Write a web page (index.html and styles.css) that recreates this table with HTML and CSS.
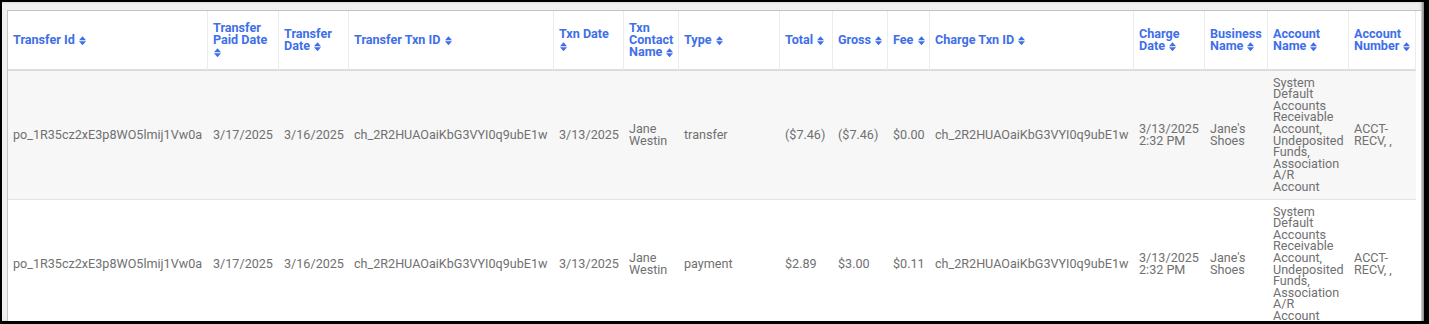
FILE: index.html
```html
<!DOCTYPE html>
<html lang="en">
<head>
<meta charset="utf-8">
<title>Transfers</title>
<link rel="stylesheet" href="styles.css">
</head>
<body>
<div class="window">
  <div class="panel">
    <table class="grid">
      <colgroup>
        <col class="c1"><col class="c2"><col class="c3"><col class="c4"><col class="c5">
        <col class="c6"><col class="c7"><col class="c8"><col class="c9"><col class="c10">
        <col class="c11"><col class="c12"><col class="c13"><col class="c14"><col class="c15">
      </colgroup>
      <thead>
        <tr>
          <th>Transfer Id <svg class="sort" viewBox="0 0 7 9"><path d="M0 4 L3.5 0 L7 4 Z M0 5 L7 5 L3.5 9 Z"/></svg></th>
          <th>Transfer Paid Date <svg class="sort" viewBox="0 0 7 9"><path d="M0 4 L3.5 0 L7 4 Z M0 5 L7 5 L3.5 9 Z"/></svg></th>
          <th>Transfer Date <svg class="sort" viewBox="0 0 7 9"><path d="M0 4 L3.5 0 L7 4 Z M0 5 L7 5 L3.5 9 Z"/></svg></th>
          <th>Transfer Txn ID <svg class="sort" viewBox="0 0 7 9"><path d="M0 4 L3.5 0 L7 4 Z M0 5 L7 5 L3.5 9 Z"/></svg></th>
          <th>Txn Date <svg class="sort" viewBox="0 0 7 9"><path d="M0 4 L3.5 0 L7 4 Z M0 5 L7 5 L3.5 9 Z"/></svg></th>
          <th>Txn Contact Name <svg class="sort" viewBox="0 0 7 9"><path d="M0 4 L3.5 0 L7 4 Z M0 5 L7 5 L3.5 9 Z"/></svg></th>
          <th>Type <svg class="sort" viewBox="0 0 7 9"><path d="M0 4 L3.5 0 L7 4 Z M0 5 L7 5 L3.5 9 Z"/></svg></th>
          <th>Total <svg class="sort" viewBox="0 0 7 9"><path d="M0 4 L3.5 0 L7 4 Z M0 5 L7 5 L3.5 9 Z"/></svg></th>
          <th>Gross <svg class="sort" viewBox="0 0 7 9"><path d="M0 4 L3.5 0 L7 4 Z M0 5 L7 5 L3.5 9 Z"/></svg></th>
          <th>Fee <svg class="sort" viewBox="0 0 7 9"><path d="M0 4 L3.5 0 L7 4 Z M0 5 L7 5 L3.5 9 Z"/></svg></th>
          <th>Charge Txn ID <svg class="sort" viewBox="0 0 7 9"><path d="M0 4 L3.5 0 L7 4 Z M0 5 L7 5 L3.5 9 Z"/></svg></th>
          <th>Charge Date <svg class="sort" viewBox="0 0 7 9"><path d="M0 4 L3.5 0 L7 4 Z M0 5 L7 5 L3.5 9 Z"/></svg></th>
          <th>Business Name <svg class="sort" viewBox="0 0 7 9"><path d="M0 4 L3.5 0 L7 4 Z M0 5 L7 5 L3.5 9 Z"/></svg></th>
          <th>Account Name <svg class="sort" viewBox="0 0 7 9"><path d="M0 4 L3.5 0 L7 4 Z M0 5 L7 5 L3.5 9 Z"/></svg></th>
          <th>Account Number <svg class="sort" viewBox="0 0 7 9"><path d="M0 4 L3.5 0 L7 4 Z M0 5 L7 5 L3.5 9 Z"/></svg></th>
        </tr>
      </thead>
      <tbody>
        <tr class="odd">
          <td>po_1R35cz2xE3p8WO5lmij1Vw0a</td>
          <td>3/17/2025</td>
          <td>3/16/2025</td>
          <td>ch_2R2HUAOaiKbG3VYI0q9ubE1w</td>
          <td>3/13/2025</td>
          <td>Jane Westin</td>
          <td>transfer</td>
          <td>($7.46)</td>
          <td>($7.46)</td>
          <td>$0.00</td>
          <td>ch_2R2HUAOaiKbG3VYI0q9ubE1w</td>
          <td>3/13/2025 2:32 PM</td>
          <td>Jane's Shoes</td>
          <td class="acct">System Default Accounts Receivable Account, Undeposited Funds, Association A/R Account</td>
          <td>ACCT-RECV, ,</td>
        </tr>
        <tr>
          <td>po_1R35cz2xE3p8WO5lmij1Vw0a</td>
          <td>3/17/2025</td>
          <td>3/16/2025</td>
          <td>ch_2R2HUAOaiKbG3VYI0q9ubE1w</td>
          <td>3/13/2025</td>
          <td>Jane Westin</td>
          <td>payment</td>
          <td>$2.89</td>
          <td>$3.00</td>
          <td>$0.11</td>
          <td>ch_2R2HUAOaiKbG3VYI0q9ubE1w</td>
          <td>3/13/2025 2:32 PM</td>
          <td>Jane's Shoes</td>
          <td class="acct">System Default Accounts Receivable Account, Undeposited Funds, Association A/R Account</td>
          <td>ACCT-RECV, ,</td>
        </tr>
      </tbody>
    </table>
  </div>
</div>
</body>
</html>
```

FILE: styles.css
```css
html, body {
  margin: 0;
  padding: 0;
  background: #000;
}

body {
  width: 1429px;
  height: 324px;
  overflow: hidden;
  font-family: Roboto, "Liberation Sans", Arial, sans-serif;
}

.window {
  margin: 2px 0 0 2px;
  width: 1422px;
  height: 319px;
  box-sizing: border-box;
  padding: 8px 3px 0 5px;
  background: #f0f0f0;
  box-shadow: inset -3px 0 3px -1px rgba(0, 0, 0, 0.45);
  overflow: hidden;
}

.panel {
  height: 100%;
  background: #fff;
  border-left: 1px solid #c4c4c4;
  border-top: 1px solid #c4c4c4;
  overflow: hidden;
}

.grid {
  table-layout: fixed;
  border-collapse: separate;
  border-spacing: 0;
  width: 1408px;
  font-size: 12.6px;
}

.c1 { width: 200px; }
.c2 { width: 71px; }
.c3 { width: 70px; }
.c4 { width: 205px; }
.c5 { width: 70px; }
.c6 { width: 55px; }
.c7 { width: 101px; }
.c8 { width: 53px; }
.c9 { width: 55px; }
.c10 { width: 42px; }
.c11 { width: 204px; }
.c12 { width: 71px; }
.c13 { width: 63px; }
.c14 { width: 81px; }
.c15 { width: 67px; }

.grid th {
  text-align: left;
  vertical-align: middle;
  font-weight: 700;
  color: #3f6fe8;
  line-height: 12.2px;
  padding: 11px 4px 10px 5px;
  border-right: 1px solid #ececec;
  border-bottom: 2px solid #dcdcdc;
}

.sort {
  display: inline-block;
  width: 7px;
  height: 9.5px;
  fill: #3f6fe8;
  vertical-align: -1px;
  margin-left: 1px;
}

.grid td {
  vertical-align: middle;
  color: #707070;
  line-height: 11.6px;
  padding: 6px 4px 6px 5px;
  border-bottom: 1px solid #e3e3e3;
  word-wrap: break-word;
}

.grid td.acct {
  padding-right: 5.5px;
  word-wrap: normal;
  overflow-wrap: normal;
}

.grid tr.odd td {
  background: #f7f7f7;
}
```
